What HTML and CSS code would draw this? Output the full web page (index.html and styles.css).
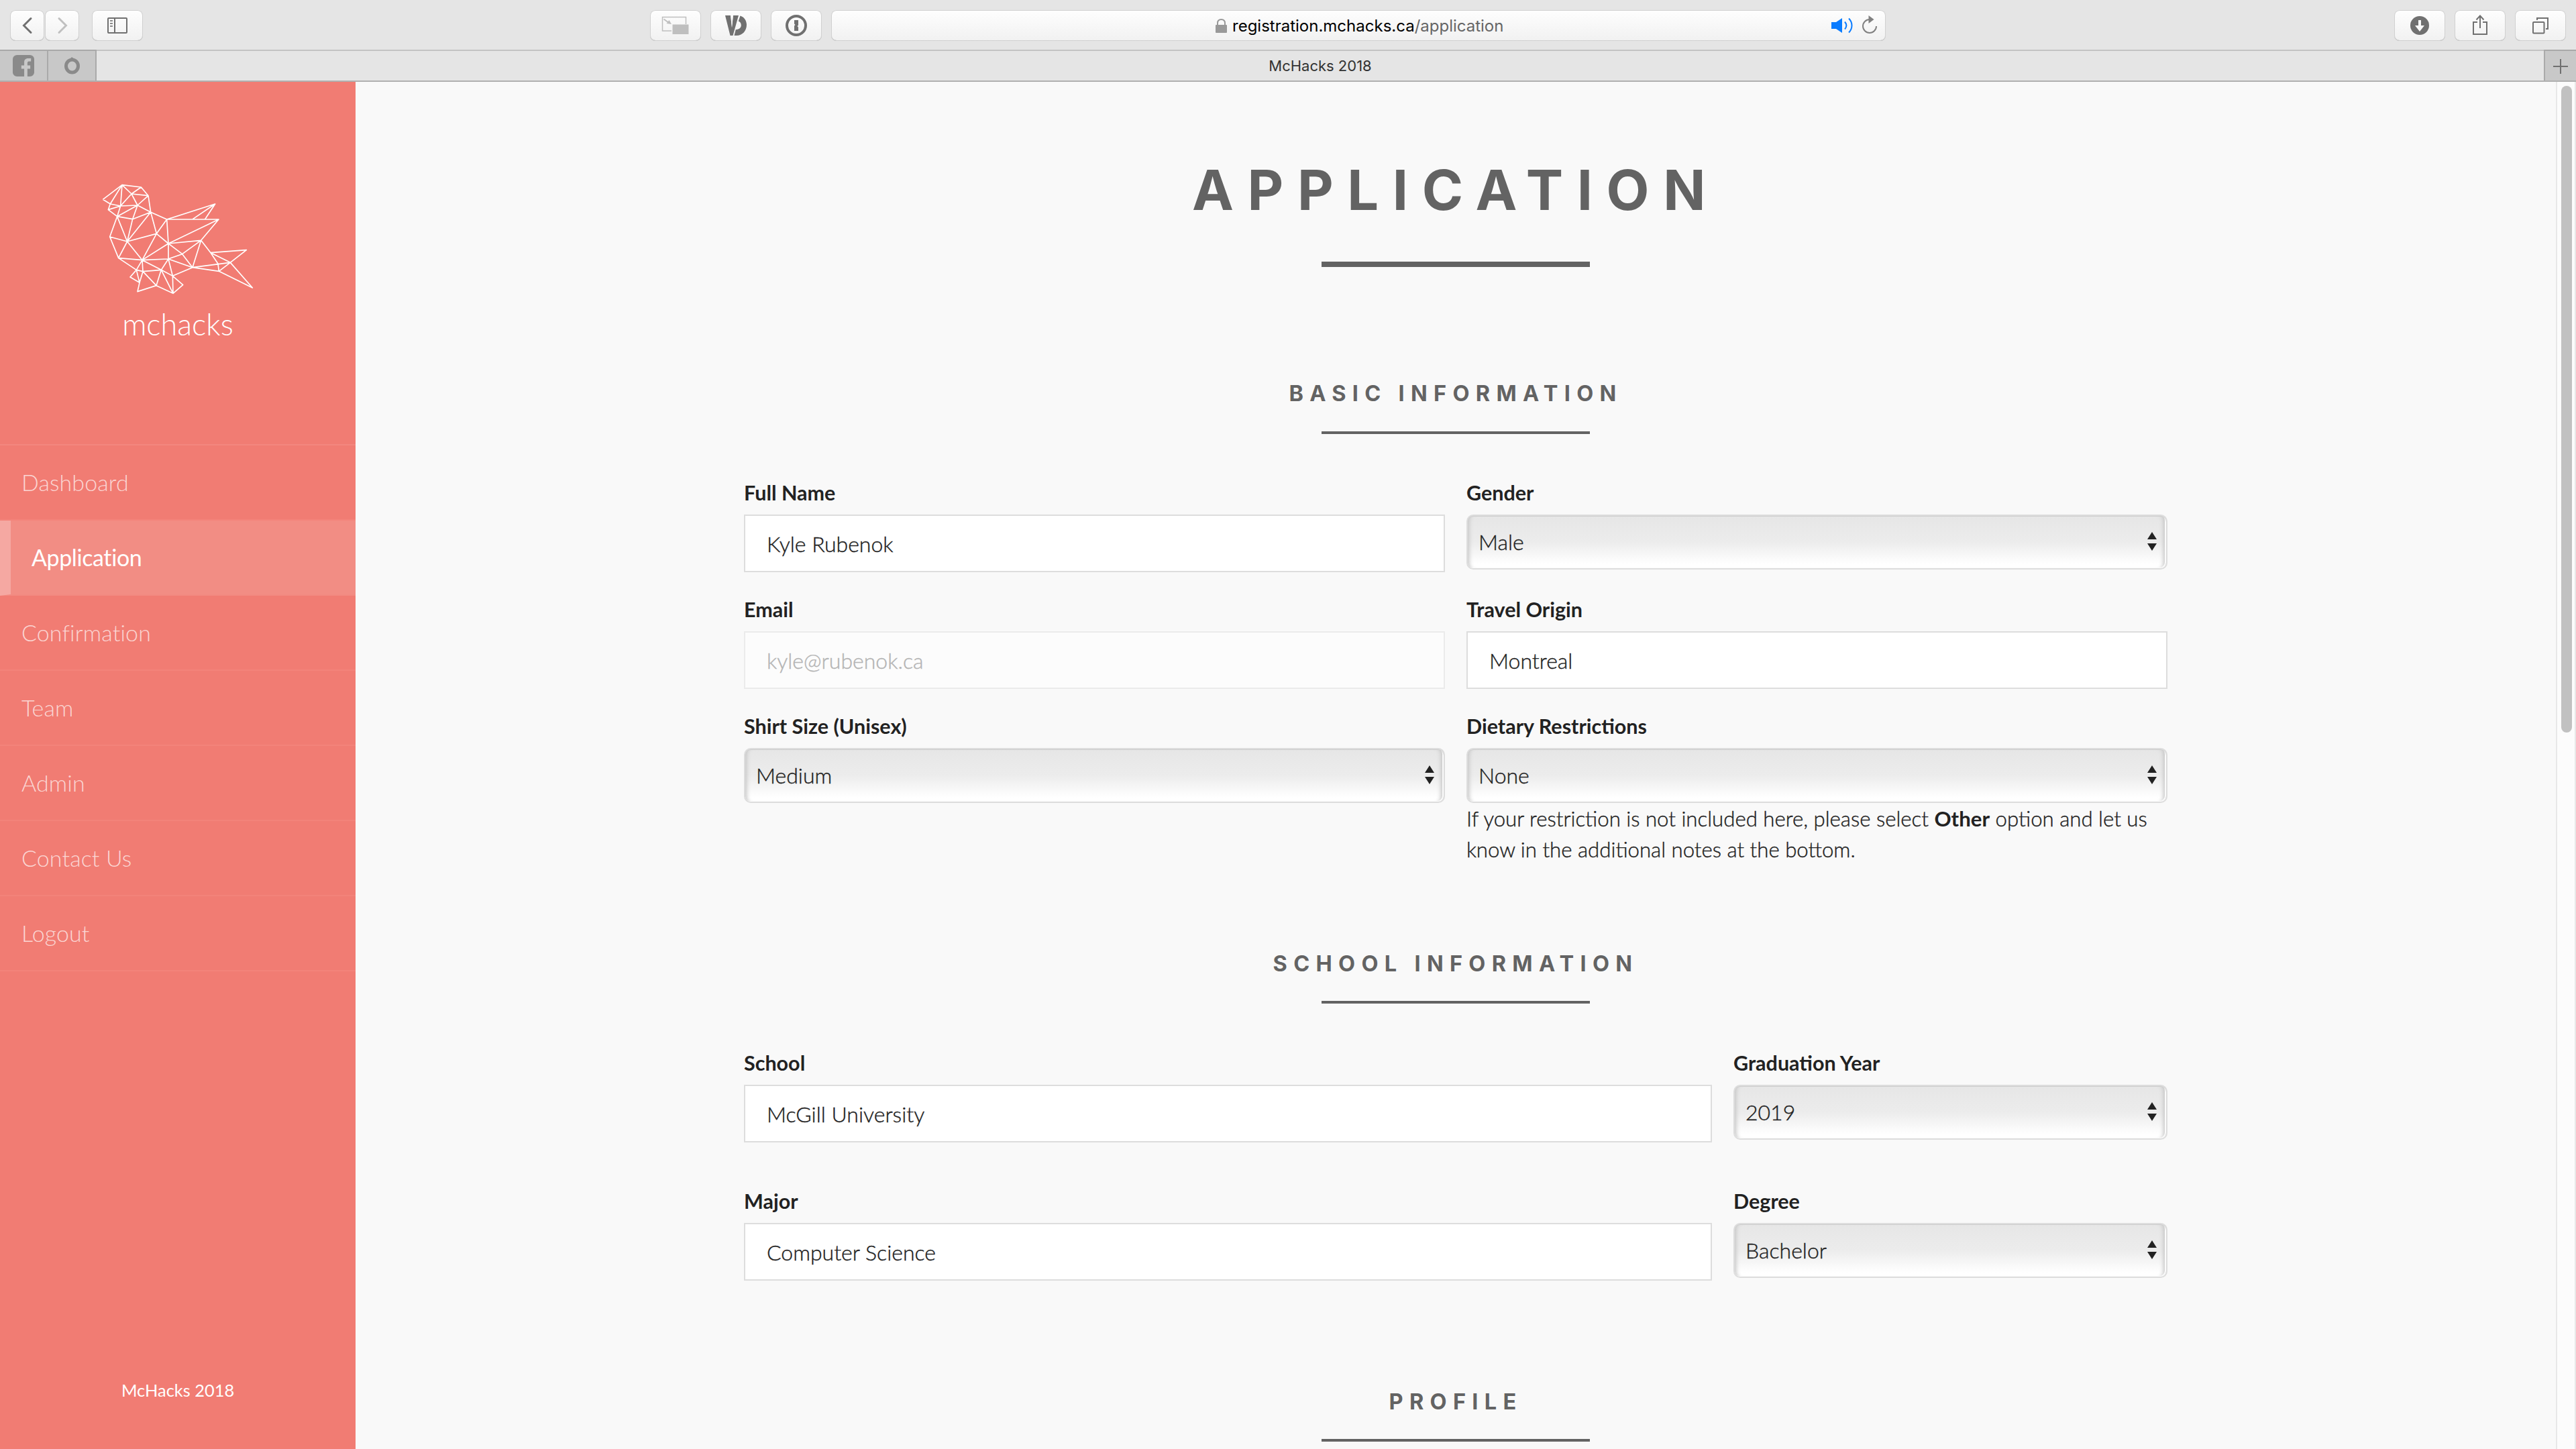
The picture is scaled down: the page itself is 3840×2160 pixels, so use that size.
FILE: index.html
```html
<!DOCTYPE html>
<html lang="en">
<head>
<meta charset="utf-8">
<title>McHacks 2018</title>
<link rel="stylesheet" href="styles.css">
</head>
<body>
<header class="toolbar">
  <div class="group nav-buttons">
    <button class="tool back"><svg width="51" height="46" viewBox="0 0 51 46"><path d="M31 12.500 20.500 23 31 33.500" class="chev"/></svg></button>
    <button class="tool forward"><svg width="51" height="46" viewBox="0 0 51 46"><path d="M21 12.500 31.500 23 21 33.500" class="chev dim"/></svg></button>
  </div>
  <button class="tool sidebar-toggle"><svg width="76" height="46" viewBox="0 0 76 46"><rect x="24" y="12" width="28" height="22" rx="1" class="line"/><path d="M34 12v22" class="line"/><path d="M27 16h4M27 20h4M27 24h4" stroke="#8a8a8a" stroke-width="1.800"/></svg></button>
  <div class="group extensions">
    <button class="tool ext"><svg width="76" height="46" viewBox="0 0 76 46"><path d="M32 31H18.500V10.500h35V21" fill="none" stroke="#bfbfbf" stroke-width="1.500"/><path d="M20.500 13.500l7 5" stroke="#bfbfbf" stroke-width="2"/><path d="M32 21l-7.500-1 4-5z" fill="#bfbfbf"/><rect x="33.500" y="21.500" width="24" height="14.500" fill="#bfbfbf"/></svg></button>
    <button class="tool ext"><svg width="76" height="46" viewBox="0 0 76 46"><path d="M22 8h8l2 18 2-18h8l-8.500 30h-4z" fill="#707070"/><path d="M32 26l-1.800-18h3.600z" fill="#f8f8f8"/><path d="M44.500 8.500c6 2 9.500 7.500 9.500 13.500 0 9-6.500 16-15 16h-3.500l2.300-9c5 0 8-2.500 8-6.500 0-3-1.500-5-4-6z" fill="#707070"/></svg></button>
    <button class="tool ext"><svg width="76" height="46" viewBox="0 0 76 46"><circle cx="38" cy="23" r="14" fill="none" stroke="#707070" stroke-width="4"/><path d="M35 15h6v7.500l-1.500 1.500 1.500 1.500V31h-6v-7.500l1.500-1.500-1.500-1.500z" fill="#707070"/></svg></button>
    <div class="address">
      <svg class="lock" width="17" height="21" viewBox="0 0 17 21"><rect y="9" width="17" height="12" rx="1" fill="#999"/><path d="M3 10V6.500C3 3 5 1 8.500 1S14 3 14 6.500V10" fill="none" stroke="#999" stroke-width="2"/></svg>
      <span class="host">registration.mchacks.ca<span class="path">/application</span></span>
      <svg class="sound" width="34" height="24" viewBox="0 0 34 24"><path d="M0 7h7l9-6v22l-9-6H0z" fill="#0a7cff"/><path d="M20 6.500c3 3.500 3 7.500 0 11M26 1.500c6 6 6 15 0 21" fill="none" stroke="#0a7cff" stroke-width="2"/></svg>
      <svg class="reload" width="24" height="28" viewBox="0 0 24 28"><path d="M12 6A10 10 0 1 0 22 16" fill="none" stroke="#808080" stroke-width="2"/><path d="M10.500 0l8 6-8 6z" fill="#808080"/></svg>
    </div>
  </div>
  <div class="group actions">
    <button class="tool ext"><svg width="76" height="46" viewBox="0 0 76 46"><circle cx="38" cy="23" r="14" fill="#707070"/><path d="M36 15h4v8h5l-7 9-7-9h5z" fill="#fafafa"/></svg></button>
    <button class="tool ext"><svg width="76" height="46" viewBox="0 0 76 46"><path d="M34 18h-6v18h20V18h-6M38 27V9M32.500 14.500 38 8.500l5.500 6" fill="none" stroke="#707070" stroke-width="2"/></svg></button>
    <button class="tool ext"><svg width="76" height="46" viewBox="0 0 76 46"><rect x="27" y="18" width="16.500" height="16.500" rx="1" fill="none" stroke="#707070" stroke-width="2"/><path d="M33 15v-3h16v16h-3" fill="none" stroke="#707070" stroke-width="2"/></svg></button>
  </div>
</header>
<div class="tabs">
  <div class="pinned"><svg width="32" height="32" viewBox="0 0 30 32" preserveAspectRatio="none"><path d="M6 0h18a6 6 0 0 1 6 6v20a6 6 0 0 1-6 6h-3.500V20.500h4v-5h-4V12c0-2 1-2.500 2.500-2.500h2.500V5h-4c-4 0-5.500 2.500-5.500 6v4.500h-4v5h4V32H6a6 6 0 0 1-6-6V6a6 6 0 0 1 6-6z" fill="#8a8a8a"/></svg></div>
  <div class="pinned"><svg width="25" height="26" viewBox="0 0 24 26"><ellipse cx="12" cy="13.500" rx="9" ry="9.500" fill="none" stroke="#8a8a8a" stroke-width="5"/><path d="M9 3l2.500-3L15 3z" fill="#8a8a8a"/></svg></div>
  <div class="tab">McHacks 2018</div>
  <div class="new-tab"><svg width="22" height="22" viewBox="0 0 22 22"><path d="M11 0v22M0 11h22" stroke="#707070" stroke-width="2"/></svg></div>
</div>
<div class="page">
  <aside class="sidebar">
    <div class="brand">
      <svg class="bird" width="270" height="200" viewBox="0 0 810 600"><path d="M70 142 156 77 241 87 273 125 284 199M70 142 103 162 149 171M103 162 94 188 134 218M156 77 103 162M156 77 149 171M156 77 198 117 241 87M198 117 273 125M198 117 225 168M198 117 149 171 225 168 273 125M225 168 284 199M94 188 149 171 134 218 225 168 203 230M134 218 203 230 284 199M203 230 179 330 134 218 101 309 179 330 140 404 101 309M179 330 246 413 140 404 220 457M284 199 179 330 310 295 284 199 356 231 310 295 246 413M310 295 363 339 356 231 572 162 472 230M572 162 527 230M356 231H588L363 339 509 325 588 231M246 413 363 339 425 386 509 325 471 446 425 386 363 408V339M509 325 552 380 712 368 640 424 552 380 585 430 589 463 640 424 739 537 589 463 471 446 640 424M246 413 363 408 471 446 382 484 363 408 331 457 246 413 249 464 331 457 309 527 249 464 220 457 246 413M220 457 192 489 234 514 220 457M249 464 234 514 225 554 309 527 384 562 331 457 382 484 384 562 428 524 382 484"/></svg>
      <div class="wordmark">mchacks</div>
    </div>
    <nav class="menu">
      <a class="item">Dashboard</a>
      <a class="item active">Application</a>
      <a class="item">Confirmation</a>
      <a class="item">Team</a>
      <a class="item">Admin</a>
      <a class="item">Contact Us</a>
      <a class="item">Logout</a>
    </nav>
    <div class="copyright">McHacks 2018</div>
  </aside>
  <main class="content">
    <h1 class="title">APPLICATION</h1>
    <div class="rule thick"></div>
    <h2 class="heading first">BASIC INFORMATION</h2>
    <div class="rule"></div>
    <form class="form basic">
      <div class="field"><label>Full Name</label><input type="text" value="Kyle Rubenok"></div>
      <div class="field"><label>Gender</label><div class="select">Male<svg class="arrows" width="14" height="28" viewBox="0 0 14 28"><path d="M7 0l7 11H0zM0 17h14L7 28z"/></svg></div></div>
      <div class="field"><label>Email</label><input class="disabled" type="text" value="kyle@rubenok.ca"></div>
      <div class="field"><label>Travel Origin</label><input type="text" value="Montreal"></div>
      <div class="field"><label>Shirt Size (Unisex)</label><div class="select">Medium<svg class="arrows" width="14" height="28" viewBox="0 0 14 28"><path d="M7 0l7 11H0zM0 17h14L7 28z"/></svg></div></div>
      <div class="field"><label>Dietary Restrictions</label><div class="select">None<svg class="arrows" width="14" height="28" viewBox="0 0 14 28"><path d="M7 0l7 11H0zM0 17h14L7 28z"/></svg></div>
        <p class="help">If your restriction is not included here, please select <b>Other</b> option and let us<br>know in the additional notes at the bottom.</p></div>
    </form>
    <h2 class="heading second">SCHOOL INFORMATION</h2>
    <div class="rule"></div>
    <form class="form school">
      <div class="field"><label>School</label><input type="text" value="McGill University"></div>
      <div class="field"><label>Graduation Year</label><div class="select">2019<svg class="arrows" width="14" height="28" viewBox="0 0 14 28"><path d="M7 0l7 11H0zM0 17h14L7 28z"/></svg></div></div>
      <div class="field"><label>Major</label><input type="text" value="Computer Science"></div>
      <div class="field"><label>Degree</label><div class="select">Bachelor<svg class="arrows" width="14" height="28" viewBox="0 0 14 28"><path d="M7 0l7 11H0zM0 17h14L7 28z"/></svg></div></div>
    </form>
    <h2 class="heading third">PROFILE</h2>
    <div class="rule"></div>
  </main>
  <div class="scrollbar"><div class="thumb"></div></div>
</div>
</body>
</html>
```
FILE: styles.css
```css
* { box-sizing: border-box; }
body {
  margin: 0;
  width: 3840px;
  height: 2160px;
  overflow: hidden;
  display: flex;
  flex-direction: column;
  background: #f9f9f9;
  color: #222;
  font-family: Lato, "Liberation Sans", sans-serif;
  font-weight: 300;
}
svg { display: block; flex: none; }

/* browser toolbar */
.toolbar {
  flex: none;
  height: 76px;
  padding: 15px 15px 0;
  display: flex;
  align-items: flex-start;
  background: #e5e5e5;
  border-bottom: 2px solid #c3c3c3;
}
.group { display: flex; }
.nav-buttons { gap: 1px; }
.tool {
  display: flex;
  align-items: center;
  justify-content: center;
  padding: 0;
  height: 46px;
  border: 0;
  border-radius: 8px;
  background: linear-gradient(#fefefe, #f1f1f1);
  box-shadow: inset 0 0 0 1px #d0d0d0, inset 0 -1px 0 #b0b0b0;
}
.back, .forward { width: 51px; }
.sidebar-toggle { width: 76px; margin-left: 19px; }
.ext { width: 76px; }
.chev { fill: none; stroke: #707070; stroke-width: 3; stroke-linecap: round; }
.chev.dim { stroke: #c0c0c0; }
.line { fill: none; stroke: #707070; stroke-width: 2; }
.extensions { margin-left: 756px; gap: 14px; }
.actions { margin-left: auto; gap: 14px; }
.address {
  width: 1572px;
  height: 46px;
  padding: 0 12px 0 573px;
  display: flex;
  align-items: center;
  border-radius: 8px;
  background: linear-gradient(#fefefe, #f1f1f1);
  box-shadow: inset 0 0 0 1px #d0d0d0, inset 0 -1px 0 #b0b0b0;
  font: 400 24px Inter, sans-serif;
}
.host { margin-left: 8px; color: #000; white-space: nowrap; }
.path { color: #666; }
.sound { margin-left: auto; }
.reload { margin-left: 11px; margin-bottom: 3px; }

/* tab strip */
.tabs {
  flex: none;
  height: 46px;
  display: flex;
  background: #e5e5e5;
  border-bottom: 2px solid #b0b0b0;
}
.pinned, .new-tab {
  display: flex;
  align-items: center;
  justify-content: center;
  background: #c8c8c8;
  box-shadow: 0 -2px 0 #a9a9a9;
}
.pinned { width: 72px; border-right: 2px solid #aaa; }
.new-tab { width: 48px; border-left: 2px solid #aaa; padding-top: 2px; }
.tab {
  flex: 1;
  display: flex;
  align-items: center;
  justify-content: center;
  font: 400 22px Inter, sans-serif;
  color: #333;
}

.page { flex: 1; display: flex; min-height: 0; }

/* sidebar */
.sidebar {
  flex: none;
  width: 530px;
  display: flex;
  flex-direction: column;
  background: #f17c73;
}
.brand { height: 540px; padding: 128px 0 0 130px; }
.bird { fill: none; stroke: #fff; stroke-width: 5; stroke-linejoin: round; }
.wordmark {
  width: 270px;
  margin-top: 6px;
  text-align: center;
  font-size: 45px;
  line-height: 54px;
  color: #fff;
}
.menu { display: flex; flex-direction: column; border-top: 2px solid #f3877f; }
.item {
  height: 112px;
  padding-left: 32px;
  line-height: 110px;
  font-size: 34px;
  letter-spacing: .1px;
  border-bottom: 2px solid #f3837a;
  color: rgba(255, 255, 255, .7);
}
.active {
  padding-left: 31px;
  border-left: 16px solid #f5a8a2;
  border-bottom-color: #f28a81;
  background: #f28d84;
  color: #fff;
  font-weight: 400;
  letter-spacing: -.4px;
}
.copyright {
  margin-top: auto;
  padding-bottom: 72px;
  text-align: center;
  font-size: 25.4px;
  line-height: 32px;
  color: #fff;
  font-weight: 400;
}

/* content */
.content {
  flex: 1;
  display: flex;
  flex-direction: column;
  align-items: center;
  padding-top: 111px;
  overflow: hidden;
}
.title, .heading {
  margin: 0;
  flex: none;
  font-family: Inter, sans-serif;
  font-weight: 700;
  color: #636363;
  white-space: nowrap;
}
.title { font-size: 83px; line-height: 100px; letter-spacing: 20.6px; }
.heading { font-size: 32.500px; line-height: 40px; letter-spacing: 9.300px; }
.first { margin-top: 169px; }
.second { margin-top: 127px; }
.third { margin-top: 161px; }
.rule { flex: none; width: 400px; height: 4px; margin-top: 36px; background: #636363; }
.thick { height: 8px; margin-top: 57px; }
.second + .rule, .third + .rule { margin-top: 35px; }
.form { flex: none; width: 2122px; display: grid; column-gap: 32px; }
.basic { margin-top: 64px; grid-template-columns: 1fr 1fr; grid-template-rows: 174px 174px 231px; }
.school { margin-top: 65px; grid-template-columns: 1443px 1fr; grid-template-rows: 206px 142px; }
.field { display: flex; flex-direction: column; }
.field label { height: 46px; margin-bottom: 10px; line-height: 46px; font-size: 30.500px; font-weight: 700; }
.field input {
  width: 100%;
  height: 86px;
  padding: 1px 32px 0;
  border: 2px solid #ddd;
  border-radius: 0;
  background: #fff;
  color: #222;
  font: 300 32px Lato, sans-serif;
}
.field input, .select, .help { -webkit-text-stroke: .4px currentColor; }
.field .disabled { border-color: #ebebeb; background: #fcfcfc; color: #b4b4b4; }
.select {
  height: 82px;
  padding: 0 14px 2px 16px;
  display: flex;
  align-items: center;
  justify-content: space-between;
  border: 2px solid #ddd;
  border-radius: 10px;
  background: linear-gradient(#e6e6e6, #ececec 50%, #fff 92%);
  box-shadow: inset 0 1px 0 #ccc, inset -2px -1px 0 #fafafa, inset 8px 0 6px -6px #c4c4c4, inset -10px 0 6px -6px #c4c4c4;
  font-size: 32px;
}
.arrows { fill: #222; }
.help { margin: 0; font-size: 31.200px; line-height: 46px; white-space: nowrap; }
.help b { font-weight: 700; -webkit-text-stroke: 0; }

.scrollbar {
  flex: none;
  width: 30px;
  padding: 6px 0 0 6px;
  border-left: 2px solid #e8e8e8;
  border-right: 2px solid #e8e8e8;
  background: #fcfcfc;
}
.thumb { width: 16px; height: 964px; border-radius: 8px; background: #c1c1c1; }
```
